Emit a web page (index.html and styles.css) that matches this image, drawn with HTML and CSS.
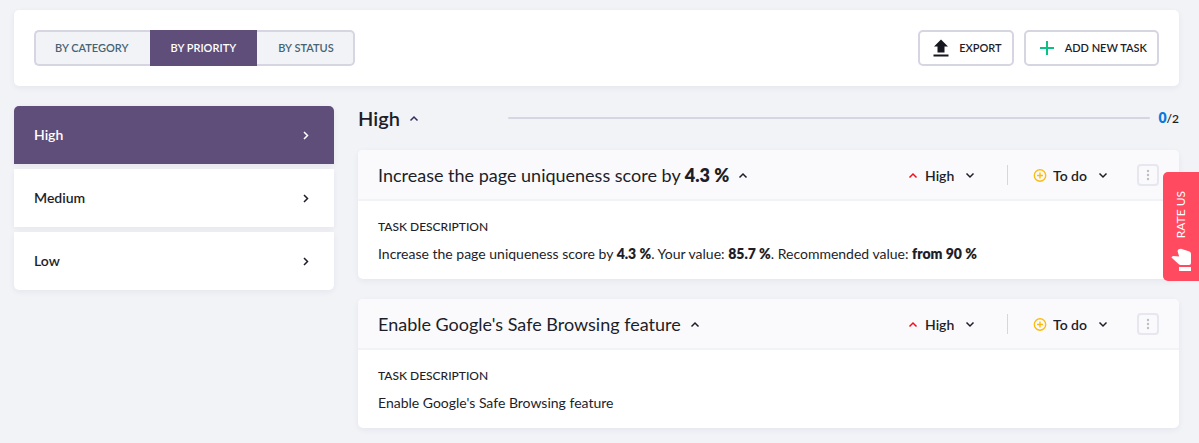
FILE: index.html
```html
<!DOCTYPE html>
<html lang="en">
<head>
<meta charset="utf-8">
<title>Tasks</title>
<meta name="viewport" content="width=device-width, initial-scale=1">
<link rel="stylesheet" href="styles.css">
</head>
<body>
<svg class="sprite" aria-hidden="true">
  <symbol id="up" viewBox="0 0 10 10"><path d="M1.500 7.500 5 4 8.500 7.500"/></symbol>
  <symbol id="down" viewBox="0 0 10 10"><path d="M1.500 3.500 5 7 8.500 3.500"/></symbol>
  <symbol id="right" viewBox="0 0 10 10"><path d="M3 2 6.500 5.500 3 9"/></symbol>
  <symbol id="todo" viewBox="0 0 14 14"><circle cx="7" cy="7.500" r="5.700"/><path d="M7 4.500v6M4 7.500h6"/></symbol>
  <symbol id="dots" viewBox="0 0 12 12"><circle cx="6" cy="2" r="1.200"/><circle cx="6" cy="6" r="1.200"/><circle cx="6" cy="10" r="1.200"/></symbol>
</svg>
<div class="page">
  <header class="toolbar">
    <div class="tabs">
      <button class="tab" type="button">BY CATEGORY</button>
      <button class="tab tab-active" type="button" aria-pressed="true">BY PRIORITY</button>
      <button class="tab" type="button">BY STATUS</button>
    </div>
    <div class="actions">
      <button class="action" type="button">
        <svg class="action-icon" viewBox="0 0 16 18" aria-hidden="true"><path fill="#16171f" d="M8 .5 15 7.500H11.500V13.500H4.500V7.500H1ZM.5 15.500H15.500V17.500H.5Z"/></svg>
        EXPORT
      </button>
      <button class="action" type="button">
        <svg class="action-icon" viewBox="0 0 16 18" aria-hidden="true"><path fill="none" stroke="#0cc184" stroke-width="2" d="M8 2v14M1 9h14"/></svg>
        ADD NEW TASK
      </button>
    </div>
  </header>
  <div class="columns">
    <nav class="side">
      <button class="side-item side-active" type="button">High<svg class="chev"><use href="#right"/></svg></button>
      <button class="side-item" type="button">Medium<svg class="chev"><use href="#right"/></svg></button>
      <button class="side-item" type="button">Low<svg class="chev"><use href="#right"/></svg></button>
    </nav>
    <main class="main">
      <div class="group">
        <h2 class="group-title">High<button class="toggle toggle-group" type="button" aria-label="Collapse group"><svg class="chev"><use href="#up"/></svg></button></h2>
        <div class="track"></div>
        <div class="count"><b class="done">0</b>/2</div>
      </div>
      <article class="card">
        <div class="card-head">
          <h3 class="card-title"><span>Increase the page uniqueness score by <b>4.3&nbsp;%</b></span><button class="toggle" type="button" aria-label="Collapse task"><svg class="chev"><use href="#up"/></svg></button></h3>
          <div class="controls">
            <label class="field"><svg class="chev chev-red"><use href="#up"/></svg><select class="select select-priority" aria-label="Priority"><option>High</option><option>Medium</option><option>Low</option></select><svg class="chev"><use href="#down"/></svg></label>
            <span class="divider"></span>
            <label class="field"><svg class="todo"><use href="#todo"/></svg><select class="select select-status" aria-label="Status"><option>To do</option><option>Done</option></select><svg class="chev"><use href="#down"/></svg></label>
            <button class="more" type="button" aria-label="More"><svg class="dots"><use href="#dots"/></svg></button>
          </div>
        </div>
        <div class="card-body">
          <h4 class="label">TASK DESCRIPTION</h4>
          <p class="text">Increase the page uniqueness score by <b>4.3&nbsp;%</b>. Your value: <b>85.7&nbsp;%</b>. Recommended value: <b>from 90&nbsp;%</b></p>
        </div>
      </article>
      <article class="card">
        <div class="card-head">
          <h3 class="card-title"><span>Enable Google's Safe Browsing feature</span><button class="toggle" type="button" aria-label="Collapse task"><svg class="chev"><use href="#up"/></svg></button></h3>
          <div class="controls">
            <label class="field"><svg class="chev chev-red"><use href="#up"/></svg><select class="select select-priority" aria-label="Priority"><option>High</option><option>Medium</option><option>Low</option></select><svg class="chev"><use href="#down"/></svg></label>
            <span class="divider"></span>
            <label class="field"><svg class="todo"><use href="#todo"/></svg><select class="select select-status" aria-label="Status"><option>To do</option><option>Done</option></select><svg class="chev"><use href="#down"/></svg></label>
            <button class="more" type="button" aria-label="More"><svg class="dots"><use href="#dots"/></svg></button>
          </div>
        </div>
        <div class="card-body">
          <h4 class="label">TASK DESCRIPTION</h4>
          <p class="text">Enable Google's Safe Browsing feature</p>
        </div>
      </article>
    </main>
  </div>
</div>
<button class="rate" type="button">
  <svg class="thumb" viewBox="0 0 20 24" aria-hidden="true"><path fill="#fff" d="M8 19H20V23H8ZM18 17H9.500Q8.500 17 7.800 16.300L.7 9.800Q.2 9.200.9 8.700L2 8 8.200 8.600 6.600 3.500Q6.400 2 7.600 1.300L10 .8 18.500 3.500Q20 4.200 20 5.700V15Q20 17 18 17Z"/></svg>
  <span class="rate-text">RATE US</span>
</button>
</body>
</html>
```
FILE: styles.css
```css
* { box-sizing: border-box; }
body { margin: 0; background: #f2f3f7; color: #1d1e29; font: 400 14px/20px Lato, "Noto Sans", sans-serif; }
button, select { font: inherit; color: inherit; margin: 0; padding: 0; border: 0; background: none; cursor: pointer; }
h2, h3, h4, p { margin: 0; font-weight: inherit; }
b { font-weight: 800; }
.sprite { display: none; }
.page { padding: 10px 20px 14px 14px; }
.toolbar { display: flex; justify-content: space-between; padding: 20px; margin-bottom: 20px; background: #fff; border-radius: 5px; box-shadow: 0 2px 6px rgba(40, 40, 80, .06); }
.tabs { display: flex; height: 36px; }
.tab { padding: 0 21px; border: 2px solid #d6d5e2; border-width: 2px 0; background: #f2f3f7; color: #456372; font-size: 11px; font-weight: 600; }
.tab:first-child { padding-left: 19px; border-left-width: 2px; border-radius: 5px 0 0 5px; }
.tab:last-child { padding-right: 19px; border-right-width: 2px; border-radius: 0 5px 5px 0; }
.tab-active { border-color: #5f4e7a; background: #5f4e7a; color: #fff; }
.actions { display: flex; gap: 10px; }
.action { display: flex; align-items: center; gap: 10px; height: 36px; padding: 0 10px 0 13px; border: 2px solid #d6d5e2; border-radius: 5px; background: #fff; font-size: 11px; font-weight: 600; }
.action-icon { width: 16px; height: 18px; }
.columns { display: flex; align-items: flex-start; gap: 24px; }
.side { display: flex; flex-direction: column; gap: 5px; flex: 0 0 320px; }
.side-item { display: flex; align-items: center; justify-content: space-between; height: 58px; padding: 0 23px 0 20px; background: #fff; font-weight: 600; box-shadow: 0 2px 6px rgba(40, 40, 80, .06); }
.side-item:first-child { border-radius: 5px 5px 0 0; }
.side-item:last-child { border-radius: 0 0 5px 5px; }
.side-item.side-active { background: #5f4e7a; color: #fff; }
.chev { display: block; flex: none; width: 10px; height: 10px; fill: none; stroke: currentColor; stroke-width: 1.500; }
.main { flex: 1; min-width: 0; }
.group { display: flex; align-items: center; height: 24px; margin-bottom: 20px; }
.group-title { display: flex; align-items: center; flex: 0 0 150px; font-size: 20px; font-weight: 600; line-height: 24px; }
.toggle { margin-left: 9px; }
.toggle-group { color: #342c5c; }
.track { flex: 1; height: 2px; margin-right: 8px; border-radius: 1px; background: #d6d5e2; }
.count { font-size: 12px; font-weight: 600; }
.done { color: #0a78e0; font-size: 14px; }
.card { margin-bottom: 20px; border-radius: 5px; background: #fff; box-shadow: 0 2px 6px rgba(40, 40, 80, .06); }
.card:last-child { margin-bottom: 0; }
.card-head { display: flex; align-items: center; justify-content: space-between; height: 51px; padding: 0 20px; border-bottom: 2px solid #f2f3f7; border-radius: 5px 5px 0 0; background: #fafafc; }
.card-title { display: flex; align-items: center; font-size: 18px; line-height: 24px; }
.controls { display: flex; align-items: center; font-weight: 600; }
.field { display: flex; align-items: center; }
.select { appearance: none; height: 22px; padding-top: 2px; outline: none; }
.select-priority { width: 40px; margin-left: 7px; }
.select-status { width: 45px; margin-left: 6px; }
.chev-red { color: #e8131f; }
.divider { width: 1px; height: 20px; margin: 0 25px 0 32px; background: #d6d5e2; }
.todo { width: 14px; height: 14px; fill: none; stroke: #fbbd13; stroke-width: 1.400; }
.more { display: grid; place-items: center; width: 22px; height: 22px; margin-left: 29px; border: 2px solid #e7e7ef; border-radius: 4px; }
.dots { width: 12px; height: 12px; fill: #bdbdc4; }
.card-body { padding: 16px 20px 15px; }
.label { margin-bottom: 7px; font-size: 12px; font-weight: 500; }
.rate { position: fixed; top: 172px; right: 0; display: flex; flex-direction: column-reverse; align-items: center; justify-content: space-between; width: 36px; height: 109px; padding: 19px 0 9px; border-radius: 5px 0 0 5px; background: #ff4a60; color: #fff; font-size: 12px; }
.thumb { width: 20px; height: 24px; }
.rate-text { writing-mode: vertical-rl; transform: rotate(180deg); line-height: 16px; }
```
